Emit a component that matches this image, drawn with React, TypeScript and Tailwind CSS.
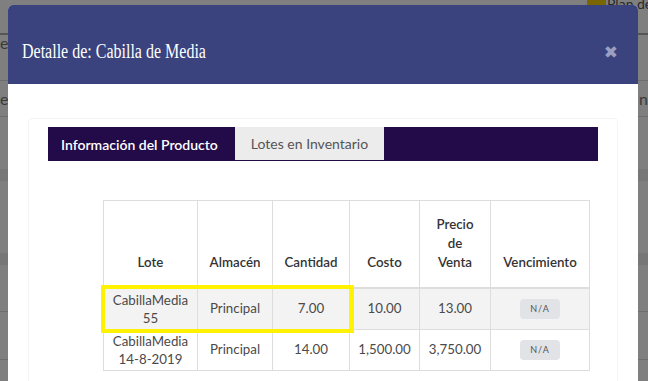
import React from "react";

const rows = [
  { lote: ["CabillaMedia", "55"], alm: "Principal", cant: "7.00", costo: "10.00", precio: "13.00" },
  { lote: ["CabillaMedia", "14-8-2019"], alm: "Principal", cant: "14.00", costo: "1,500.00", precio: "3,750.00" },
];

const heads: [string, number][] = [
  ["Lote", 94],
  ["Almacén", 75],
  ["Cantidad", 77],
  ["Costo", 70],
  ["Precio de Venta", 71],
  ["Vencimiento", 99],
];

function Background() {
  return (
    <div className="flex flex-col w-[648px] h-[381px] text-[#3a3a3a] text-[16px] leading-none">
      <div className="h-[33px] flex items-start pl-[587px] overflow-hidden">
        <div className="flex items-start gap-[1px] text-[14px] text-[#2a2a2a] -mt-[3px] whitespace-nowrap">
          <span className="inline-block w-[19px] h-[8px] bg-[#7a6600] mt-[3px]" />
          <span>Plan de</span>
        </div>
      </div>
      <div className="h-[18px] border-t-2 border-[#555] flex items-end">
        <span>e</span>
      </div>
      <div className="h-[30px] border-b border-[#6e6e6e]" />
      <div className="h-[36px] border-b border-[#6e6e6e] flex items-center justify-between">
        <span>eg</span>
        <span>n</span>
      </div>
      <div className="h-[52px]" />
      <div className="h-[12px] bg-[#777]" />
      <div className="h-[72px]" />
      <div className="h-[12px] bg-[#777]" />
      <div className="h-[47px] border-b border-[#6e6e6e]" />
      <div className="h-[48px] border-b border-[#6e6e6e]" />
    </div>
  );
}

export default function App() {
  return (
    <div className="relative w-[648px] h-[381px] overflow-hidden bg-[#7f7f7f]" style={{ fontFamily: "Lato, 'Noto Sans', sans-serif" }}>
      <Background />

      {/* modal overlay */}
      <div className="absolute left-[8px] top-[5px] w-[630px] h-[400px] bg-white rounded-t-[5px] overflow-hidden flex flex-col">
        <div className="h-[79px] shrink-0 bg-[#3a437d] flex items-center justify-between pl-[14px] pr-[20px]">
          <div
            className="text-white text-[20px] leading-none pt-[12px] scale-x-[0.8] origin-left whitespace-nowrap"
            style={{ fontFamily: "'Liberation Serif', serif" }}
          >
            Detalle de: Cabilla de Media
          </div>
          <div className="text-[#9aa0c4] text-[17px] font-bold leading-none pt-[15px]" style={{ fontFamily: "'DejaVu Sans', sans-serif" }}>
            ✖
          </div>
        </div>
        <div className="pt-[34px] px-[20px]">
          <div className="border border-[#f4f4f4] rounded-[4px] pt-[8px] px-[19px] h-[300px]">
            <div className="flex h-[34px] bg-[#230a48]">
              <div className="w-[187px] flex items-center pl-[13px] text-white text-[14px] font-semibold whitespace-nowrap">
                Información del Producto
              </div>
              <div className="w-[149px] h-[33px] flex items-center justify-center bg-[#ececec] text-[#555] text-[14px] whitespace-nowrap">
                Lotes en Inventario
              </div>
            </div>
            <div className="pt-[39px] pl-[55px]">
              <table className="border-collapse text-[13.3px] text-[#4a4a4a] text-center">
                <thead>
                  <tr className="h-[87px] align-bottom">
                    {heads.map(([t, w]) => (
                      <th
                        key={t}
                        className="border border-[#dddddd] border-b-2 font-semibold text-[#333] pb-[15px] px-[6px] leading-[19px]"
                        style={{ width: w }}
                      >
                        {t === "Precio de Venta" ? (
                          <>
                            Precio
                            <br />
                            de
                            <br />
                            Venta
                          </>
                        ) : (
                          t
                        )}
                      </th>
                    ))}
                  </tr>
                </thead>
                <tbody>
                  {rows.map((r, i) => (
                    <tr key={i} className={`h-[41px] ${i === 0 ? "bg-[#f3f3f3]" : "bg-white"}`}>
                      <td className="border border-[#dddddd] leading-[18px] py-[2px] relative">
                        {r.lote[0]}
                        <br />
                        {r.lote[1]}
                        {i === 0 && (
                          <div className="absolute left-[-3px] top-[-4px] w-[253px] h-[48px] border-[4px] border-[#fff200] pointer-events-none" />
                        )}
                      </td>
                      <td className="border border-[#dddddd]">{r.alm}</td>
                      <td className="border border-[#dddddd]">{r.cant}</td>
                      <td className="border border-[#dddddd]">{r.costo}</td>
                      <td className="border border-[#dddddd]">{r.precio}</td>
                      <td className="border border-[#dddddd]">
                        <span className="inline-block w-[40px] h-[20px] leading-[20px] rounded-[4px] bg-[#e2e3e6] text-[9px] tracking-[1px] text-[#555]">
                          N/A
                        </span>
                      </td>
                    </tr>
                  ))}
                </tbody>
              </table>
            </div>
          </div>
        </div>
      </div>
    </div>
  );
}
